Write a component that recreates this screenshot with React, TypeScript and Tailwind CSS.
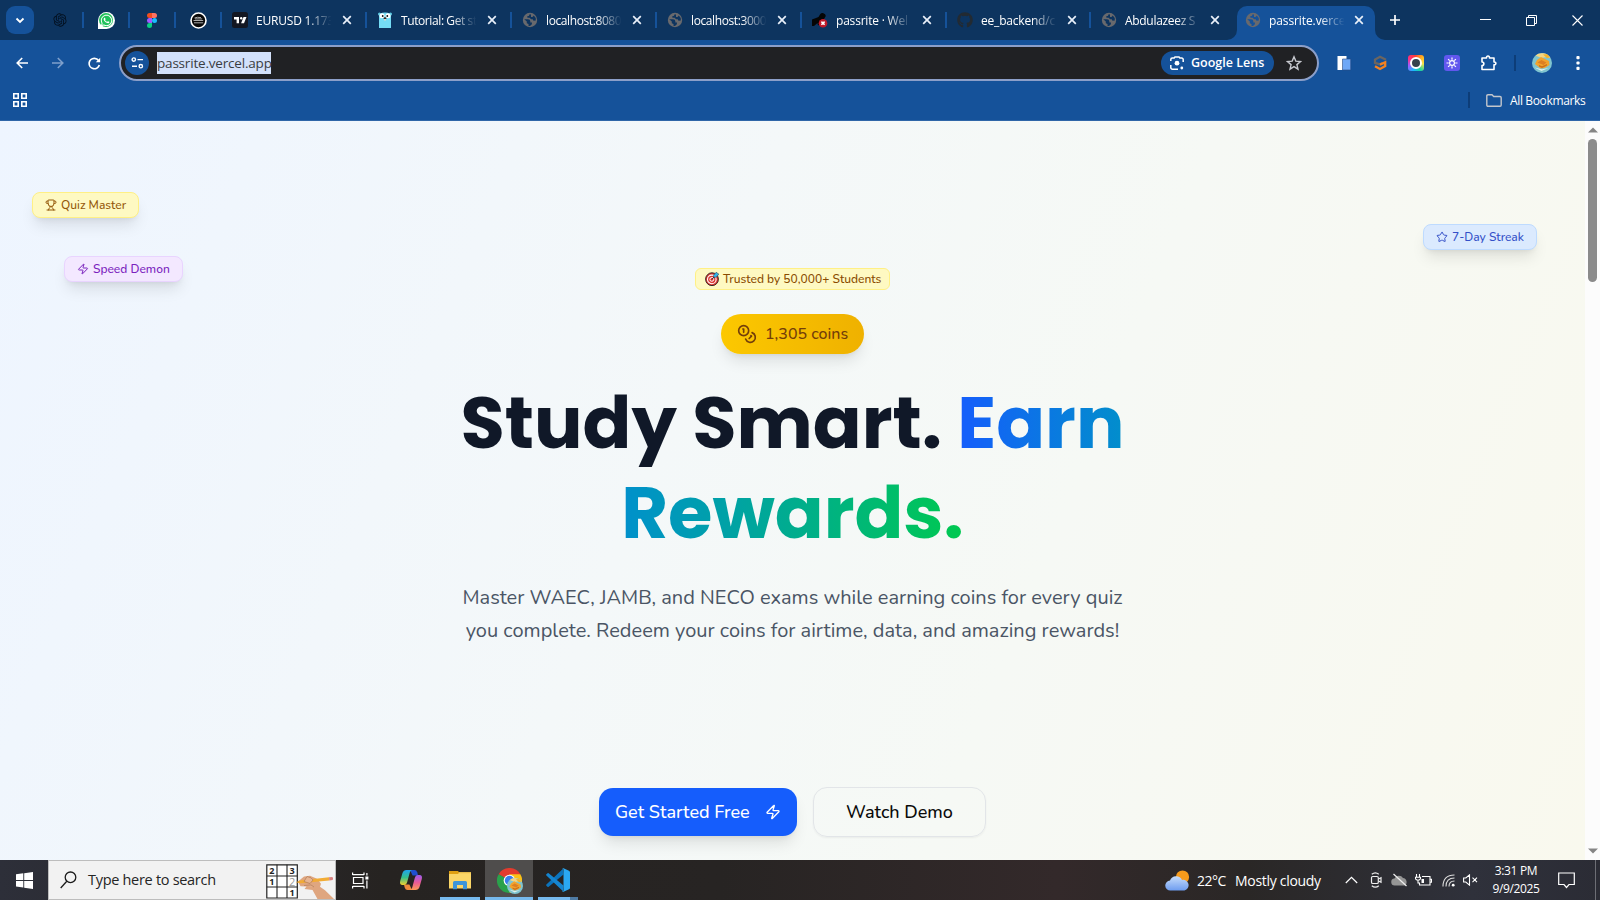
import type { ReactNode } from "react";
import { RiOpenaiFill } from "react-icons/ri";
import { FaGithub, FaWhatsapp } from "react-icons/fa";
import { Coins, Star, Trophy, Zap } from "lucide-react";

function Globe({ hole }: { hole: string }) {
  return (
    <svg width="16" height="16" viewBox="0 0 16 16">
      <circle cx="8" cy="8" r="7.2" fill="#68696d" />
      <path d="M2.200 7.300H6q2.300 0 2.300 2v1.200H10q.6 2-1.700 3.200-1.300.6-1.800 0v-1.700l-1.700-.8V9.500z" fill={hole} />
      <path d="M7.700 2.300l-.9 1.600H5.400v1.800h2.200l1.500 1.600h1.600l.8 1.400 2.300-.2q.2-3.200-2-4.900l-1.300 1.300H9V2.500z" fill={hole} />
    </svg>
  );
}

function Gopher() {
  return (
    <svg width="16" height="16" viewBox="0 0 16 16">
      <circle cx="2.500" cy="2" r="1.500" fill="#5dc9e2" />
      <circle cx="13.500" cy="2" r="1.500" fill="#5dc9e2" />
      <path d="M2 16V4.500Q2 .5 8 .5t6 4V16z" fill="#74dcf5" />
      <circle cx="5" cy="3.800" r="2.500" fill="#fff" />
      <circle cx="11" cy="3.800" r="2.500" fill="#fff" />
      <circle cx="5.700" cy="4" r=".9" fill="#111" />
      <circle cx="10.300" cy="4" r=".9" fill="#111" />
      <ellipse cx="8" cy="6.300" rx="1.500" ry="1" fill="#3b2b25" />
      <path d="M7.200 7h1.600v1.500H7.200z" fill="#f0dcc8" />
    </svg>
  );
}

function TradingView() {
  return (
    <svg width="16" height="16" viewBox="0 0 16 16">
      <rect width="16" height="16" rx="2.500" fill="#131722" />
      <path d="M2 5h5v6.200H4.600V7.500H2zM11.500 5h3l-2.500 6.200H9.100z" fill="#fff" />
      <circle cx="9.200" cy="6.200" r="1.200" fill="#fff" />
    </svg>
  );
}

function RunnerError() {
  return (
    <svg width="16" height="16" viewBox="0 0 16 16">
      <path d="M0 14V7.500l4-1.500 2.500-1L8 2.500A3.200 3.200 0 0113.800 4L12 7l-2 1-2 5-2 .3L5.500 11 2 14z" fill="#050505" />
      <circle cx="11" cy="11.200" r="4.300" fill="#c01a2a" />
      <path d="M9.400 9.600l3.200 3.200m0-3.200l-3.200 3.200" stroke="#fff" strokeWidth="1.500" />
    </svg>
  );
}

function CloseX() {
  return (
    <svg width="10" height="10" viewBox="0 0 10 10" className="shrink-0">
      <path d="M1.200 1.200l7.600 7.600M8.800 1.200L1.200 8.800" stroke="#e9f0fa" strokeWidth="1.700" />
    </svg>
  );
}

function Title({ children, tracking }: { children: ReactNode; tracking: string }) {
  return (
    <span
      className={`ml-2 w-[77px] shrink-0 pt-[2px] whitespace-nowrap text-[12px] leading-[18px] text-white [mask-image:linear-gradient(to_right,black_66%,transparent_98%)] ${tracking}`}
    >
      {children}
    </span>
  );
}

function Tab({ icon, title, width, tracking }: { icon: ReactNode; title: string; width: string; tracking: string }) {
  return (
    <div className={`flex h-full shrink-0 items-center pl-[10px] ${width}`}>
      <span className="flex w-4 shrink-0 justify-center">{icon}</span>
      <Title tracking={tracking}>{title}</Title>
      <span className="ml-[9px]">
        <CloseX />
      </span>
      <span className="ml-auto h-4 w-[2px] bg-[#15529a]" />
    </div>
  );
}

function PinnedTab({ children }: { children: ReactNode }) {
  return (
    <div className="flex h-full w-[46px] shrink-0 items-center">
      <span className="flex flex-1 justify-center">{children}</span>
      <span className="h-4 w-[2px] bg-[#15529a]" />
    </div>
  );
}

function TabStrip() {
  return (
    <div className="flex h-10 items-center bg-[#0d345f]">
      <div className="ml-[6px] flex size-7 shrink-0 items-center justify-center rounded-[9px] bg-[#15529a]">
        <svg width="10" height="7" viewBox="0 0 10 7">
          <path d="M1.500 1.500L5 5l3.500-3.500" fill="none" stroke="#fff" strokeWidth="1.800" />
        </svg>
      </div>
      <div className="ml-1 flex h-full shrink-0">
        <PinnedTab>
          <RiOpenaiFill size={16} color="#03101f" />
        </PinnedTab>
        <PinnedTab>
          <span className="flex size-[17px] items-center justify-center rounded-full rounded-bl-[4px] bg-white">
            <span className="flex size-[14px] items-center justify-center rounded-full bg-[#20c25a]">
              <FaWhatsapp size={13} color="#fff" />
            </span>
          </span>
        </PinnedTab>
        <PinnedTab>
          <svg width="10" height="15" viewBox="0 0 10 15">
            <path d="M5 0H2.500a2.500 2.500 0 000 5H5z" fill="#f24e1e" />
            <path d="M5 0h2.500a2.500 2.500 0 010 5H5z" fill="#ff7262" />
            <path d="M5 5H2.500a2.500 2.500 0 000 5H5z" fill="#a259ff" />
            <circle cx="7.500" cy="7.500" r="2.500" fill="#1abcfe" />
            <path d="M5 10H2.500A2.500 2.500 0 105 12.500z" fill="#0acf83" />
          </svg>
        </PinnedTab>
        <PinnedTab>
          <svg width="17" height="17" viewBox="0 0 17 17">
            <circle cx="8.500" cy="8.500" r="7.500" fill="#080808" stroke="#fff" strokeWidth="1.600" />
            <path d="M4.500 6Q7 4.800 11 5.600M3.500 8.500h9.700M4 10.800h9.200M5 6.900h7.200" stroke="#bdbdbd" strokeWidth=".9" fill="none" />
          </svg>
        </PinnedTab>
      </div>
      <Tab width="w-[145px]" icon={<TradingView />} title="EURUSD 1.173" tracking="tracking-[-0.2px]" />
      <Tab width="w-[145px]" icon={<Gopher />} title="Tutorial: Get st" tracking="tracking-[-0.4px]" />
      <Tab width="w-[145px]" icon={<Globe hole="#0d345f" />} title="localhost:8080" tracking="tracking-[-0.4px]" />
      <Tab width="w-[145px]" icon={<Globe hole="#0d345f" />} title="localhost:3000" tracking="tracking-[-0.4px]" />
      <Tab width="w-[145px]" icon={<RunnerError />} title="passrite · Wel" tracking="tracking-[-0.2px]" />
      <Tab width="w-[144px]" icon={<FaGithub size={16} color="#222a32" />} title="ee_backend/c" tracking="tracking-[-0.2px]" />
      <div className="flex h-full w-[146px] shrink-0 items-center pl-[10px]">
        <span className="w-4 shrink-0">
          <Globe hole="#0d345f" />
        </span>
        <Title tracking="tracking-[-0.3px]">Abdulazeez S</Title>
        <span className="ml-[8px]">
          <CloseX />
        </span>
      </div>
      <div className="relative mt-[6px] flex h-[34px] w-[138px] shrink-0 items-center rounded-t-[10px] bg-[#15529a] pb-[6px] pl-2">
        <svg width="10" height="10" viewBox="0 0 10 10" className="absolute bottom-0 -left-[10px]">
          <path d="M10 0v10H0A10 10 0 0010 0z" fill="#15529a" />
        </svg>
        <svg width="10" height="10" viewBox="0 0 10 10" className="absolute -right-[10px] bottom-0">
          <path d="M0 0v10h10A10 10 0 010 0z" fill="#15529a" />
        </svg>
        <span className="w-4 shrink-0">
          <Globe hole="#15529a" />
        </span>
        <Title tracking="tracking-[-0.1px]">passrite.verce</Title>
        <span className="ml-[8px]">
          <CloseX />
        </span>
      </div>
      <svg width="12" height="12" viewBox="0 0 12 12" className="ml-[14px] shrink-0">
        <path d="M6 1v10M1 6h10" stroke="#fff" strokeWidth="1.700" />
      </svg>
      <div className="mr-[17px] ml-auto flex items-center gap-[35px]">
        <svg width="11" height="12" viewBox="0 0 11 12">
          <path d="M0 5.500h11" stroke="#fff" />
        </svg>
        <svg width="11" height="11" viewBox="0 0 11 11">
          <path d="M.5 2.500h8v8h-8zM2.500 2.500v-2h8v8h-2" fill="none" stroke="#fff" />
        </svg>
        <svg width="11" height="11" viewBox="0 0 11 11">
          <path d="M.5.5l10 10M10.500.5l-10 10" stroke="#fff" strokeWidth="1.100" />
        </svg>
      </div>
    </div>
  );
}

function AvatarArt({ size }: { size: number }) {
  return (
    <svg width={size} height={size} viewBox="0 0 20 20">
      <circle cx="10" cy="10" r="10" fill="#7fc4cf" />
      <path d="M3.500 2.500A10 10 0 0118.500 5l-4-1-5 1z" fill="#f3d583" />
      <path d="M11 1.500l4-.2 3 3-3 1z" fill="#f2b32c" />
      <path d="M3 11l2-4 4-3 8 4 .5 4-5 3-4 .5z" fill="#f2a32c" />
      <path d="M5.500 9.500l4-2.500 5 2.500-3 2.500z" fill="#dd7f22" />
      <path d="M7 12l3 1.200 5-2.200v1.500l-5 2.500-3-1.500z" fill="#c9701c" />
      <path d="M2.500 14.500l7 3.500 7-3-6.500 1.200z" fill="#dff1ee" />
    </svg>
  );
}

function Toolbar() {
  return (
    <div className="flex h-[46px] items-center bg-[#15529a]">
      <div className="flex w-[119px] shrink-0 items-center gap-6 pl-4">
        <svg width="12" height="12" viewBox="0 0 12 12">
          <path d="M12 6H1.500M6.200 1L1.200 6l5 5" fill="none" stroke="#fff" strokeWidth="1.600" />
        </svg>
        <svg width="12" height="12" viewBox="0 0 12 12">
          <path d="M0 6h10.500M5.800 1l5 5-5 5" fill="none" stroke="#7fa0cb" strokeWidth="1.600" />
        </svg>
        <svg width="13" height="13" viewBox="0 0 13 13">
          <path d="M11.300 8A5.200 5.200 0 116.400 1.300c2 0 3.300.9 4.700 2.700" fill="none" stroke="#fff" strokeWidth="1.700" />
          <path d="M12.200.8v4.400H7.800z" fill="#fff" />
        </svg>
      </div>
      <div className="flex h-9 w-[1200px] shrink-0 items-center rounded-full border-2 border-[#8c9fc9] bg-[#202124] pl-1">
        <span className="flex size-6 items-center justify-center rounded-full bg-[#15529a]">
          <svg width="13" height="12" viewBox="0 0 13 12" fill="none" stroke="#fff" strokeWidth="1.400">
            <circle cx="2.800" cy="2.600" r="1.700" />
            <path d="M6.500 2.600h5.500M1 9.200h5" />
            <circle cx="9.800" cy="9.200" r="1.700" />
          </svg>
        </span>
        <span className="ml-2 h-[22px] w-[114px] bg-[#d3e1fb] text-[13.5px] leading-[22px] tracking-[-0.19px] whitespace-nowrap text-[#3a3d42]">
          passrite.vercel.app
        </span>
        <span className="ml-auto flex h-6 w-[113px] items-center rounded-full bg-[#15529a] pl-[9px]">
          <svg width="14" height="14" viewBox="0 0 14 14" fill="none" stroke="#fff" strokeWidth="1.500">
            <path d="M.8 5V3.500a1.500 1.500 0 011.500-1.500h1.900L5 .9h4l.8 1.100h1.900a1.500 1.500 0 011.500 1.500V6M.8 9v2.500a1.700 1.700 0 001.700 1.700H8" />
            <circle cx="7" cy="7.200" r="2.400" fill="#fff" stroke="none" />
            <circle cx="11.800" cy="12" r="1.400" fill="#fff" stroke="none" />
          </svg>
          <span className="ml-[7px] pt-px text-[12.500px] font-semibold tracking-[0px] whitespace-nowrap text-white">Google Lens</span>
        </span>
        <svg width="16" height="16" viewBox="0 0 16 16" className="mr-[15px] ml-3">
          <path d="M8 1.800l1.800 4.300 4.700.4-3.600 3.100 1.100 4.600L8 11.700l-4 2.500 1.100-4.600-3.600-3.100 4.700-.4z" fill="none" stroke="#c7c9cf" strokeWidth="1.400" />
        </svg>
      </div>
      <div className="ml-[17px] flex items-center gap-5">
        <svg width="16" height="16" viewBox="0 0 16 16">
          <path d="M1.500 1h9v14h-9z" fill="#fff" />
          <path d="M6.500 4h8.200v11H6.500z" fill="#6fa8f7" stroke="#2a4a80" strokeWidth=".6" />
        </svg>
        <svg width="16" height="16" viewBox="0 0 16 16" fill="none" strokeWidth="2.300">
          <path d="M14 4.800L8 1.800 3 4.600v3.200l5 1.600 2.500-1.600" stroke="#6b6560" />
          <path d="M3 11.200L8 14l5.200-3V7.200L8 9.600" stroke="#f58220" />
        </svg>
        <span className="flex size-4 items-center justify-center rounded-[3px] bg-[conic-gradient(from_45deg,#ffb020,#f6e34b,#1bd4a0,#18b8ff,#a05cff,#ff2f7d,#ff3b30,#ffb020)]">
          <span className="size-[12px] rounded-full border-2 border-white bg-[#35424d]" />
        </span>
        <span className="flex size-4 items-center justify-center rounded-[3px] bg-[#6257ee]">
          <svg width="12" height="12" viewBox="0 0 12 12" stroke="#fff" strokeWidth="1.200">
            <circle cx="6" cy="6" r="2.400" fill="none" />
            <path d="M6 .5v2.300M6 9.200v2.300M.5 6h2.300M9.200 6h2.300M2.100 2.100l1.600 1.600M8.300 8.300l1.600 1.600M2.100 9.900l1.600-1.600M8.300 3.700l1.600-1.600" />
          </svg>
        </span>
        <svg width="18" height="18" viewBox="0 0 18 18">
          <path d="M2 4h4.500c-.3-2.700 3.300-2.700 3 0H14v4c2.500-.3 2.500 3 0 2.700v4.800H2v-4c2.500 0 2.500-3.500 0-3.500z" fill="none" stroke="#fff" strokeWidth="1.600" strokeLinejoin="round" />
        </svg>
      </div>
      <span className="ml-4 h-4 w-[2px] bg-[#0d3d78]" />
      <span className="ml-4 flex">
        <AvatarArt size={20} />
      </span>
      <svg width="4" height="14" viewBox="0 0 4 14" className="ml-6" fill="#fff">
        <rect x=".4" y="0" width="3.200" height="3.200" rx="1" />
        <rect x=".4" y="5.400" width="3.200" height="3.200" rx="1" />
        <rect x=".4" y="10.800" width="3.200" height="3.200" rx="1" />
      </svg>
    </div>
  );
}

function BookmarksBar() {
  return (
    <div className="flex h-[35px] items-center border-b border-[#2f66a8] bg-[#15529a] pb-[6px] pl-[13px]">
      <svg width="14" height="14" viewBox="0 0 14 14" fill="none" stroke="#fff" strokeWidth="1.600">
        <path d="M.8.8h4.400v4.400H.8zM8.800.8h4.400v4.400H8.800zM.8 8.800h4.400v4.400H.8zM8.800 8.800h4.400v4.400H8.800z" />
      </svg>
      <span className="ml-auto h-4 w-[2px] bg-[#0d3d78]" />
      <svg width="16" height="13" viewBox="0 0 16 13" className="ml-4" fill="none" stroke="#c3c6cc" strokeWidth="1.400">
        <path d="M.8 11V2Q.8.800 2 .800h4L7.700 2.500H14q1.200 0 1.200 1.200V11q0 1.200-1.200 1.200H2Q.800 12.200.800 11z" />
      </svg>
      <span className="ml-2 w-[75px] pt-px text-[12px] tracking-[-0.36px] whitespace-nowrap text-white">All Bookmarks</span>
      <span className="w-[15px]" />
    </div>
  );
}

function Hero() {
  return (
    <div className="relative flex flex-1 flex-col items-center bg-[linear-gradient(112deg,#eef5ff,#f4f8f9_42%,#f6f9f5_65%,#f9f9ee)] font-[Nunito,Lato,sans-serif]">
      <div className="absolute top-[71px] left-8 flex h-[26px] w-[107px] items-center gap-1 rounded-lg border border-[#fff085] bg-[#fef9c2] px-3 text-[12px] font-medium whitespace-nowrap text-[#94580a] shadow-lg">
        <Trophy size={12} className="shrink-0" />
        <span>Quiz Master</span>
      </div>
      <div className="absolute top-[135px] left-16 flex h-[26px] w-[119px] items-center gap-1 rounded-lg border border-[#e9d4ff] bg-[#f3e8ff] px-3 text-[12px] font-medium whitespace-nowrap text-[#7a22bd] shadow-lg">
        <Zap size={12} className="shrink-0" />
        <span>Speed Demon</span>
      </div>
      <div className="absolute top-[103px] right-12 flex h-[26px] w-[114px] items-center gap-1 rounded-lg border border-[#bedbff] bg-[#dbeafe] px-3 text-[12px] font-medium whitespace-nowrap text-[#3450c8] shadow-lg">
        <Star size={12} className="shrink-0" />
        <span>7-Day Streak</span>
      </div>

      <div className="mt-[147px] flex h-[22px] w-[195px] items-center rounded-md border border-[#fff085] bg-[#fef9c2] pl-[9px] text-[12px] font-medium whitespace-nowrap text-[#894b00]">
        <svg width="14" height="14" viewBox="0 0 14 14" className="shrink-0">
          <circle cx="7" cy="7.200" r="6.400" fill="#e03a34" stroke="#241a1a" strokeWidth=".9" />
          <circle cx="6.800" cy="7.400" r="4.300" fill="none" stroke="#fff" strokeWidth="1.100" />
          <circle cx="6.800" cy="7.400" r="1.900" fill="none" stroke="#fff" strokeWidth="1" />
          <path d="M7 7.300L10.500 3.600" stroke="#222" strokeWidth="1" />
          <path d="M8.500 3.300L11.500 0l.9 1.500 1.600.6L11.200 5.200l-2.400.1z" fill="#34b5ea" stroke="#163b56" strokeWidth=".5" />
        </svg>
        <span className="ml-1">Trusted by 50,000+ Students</span>
      </div>

      <div className="mt-6 flex h-10 w-[143px] items-center gap-2 rounded-full bg-[linear-gradient(to_right,#fcc800,#efb100)] px-4 text-[16px] font-medium whitespace-nowrap text-[#733e0a] shadow-lg">
        <Coins size={20} className="shrink-0" />
        <span>1,305 coins</span>
      </div>

      <h1 className="mt-6 w-[760px] text-center font-[Poppins,Inter,sans-serif] text-[72px] leading-[90px] font-bold whitespace-nowrap text-[#101828]">
        Study Smart.{" "}
        <span className="bg-[linear-gradient(to_right,#155dfc,#0092c8_35%,#00c950)] bg-clip-text text-transparent">
          Earn
          <br />
          Rewards.
        </span>
      </h1>

      <p className="mt-[23px] text-center text-[20px] leading-[33px] whitespace-nowrap text-[#4a5565]">
        Master WAEC, JAMB, and NECO exams while earning coins for every quiz
        <br />
        you complete. Redeem your coins for airtime, data, and amazing rewards!
      </p>

      <div className="mt-auto mb-[23px] flex items-center gap-4">
        <button className="flex h-12 w-[198px] items-center rounded-[14px] bg-[#155dfc] px-4 text-[18px] font-medium whitespace-nowrap text-white shadow-lg">
          <span>Get Started Free</span>
          <Zap size={16} className="ml-auto" />
        </button>
        <button className="flex h-[50px] w-[173px] items-center justify-center rounded-[14px] border border-[#e2e5e8] text-[18px] font-medium whitespace-nowrap text-[#0a0a0a] shadow-xs">
          Watch Demo
        </button>
      </div>
    </div>
  );
}

function Scrollbar() {
  return (
    <div className="flex w-[15px] flex-col items-center bg-[#fcfcfc]">
      <svg width="10" height="6" viewBox="0 0 10 6" className="mt-[6px]">
        <path d="M0 5.500h10L5 .500z" fill="#858585" />
      </svg>
      <div className="mt-[6px] h-[143px] w-[9px] rounded-full bg-[#8b8b8b]" />
      <svg width="10" height="6" viewBox="0 0 10 6" className="mt-auto mb-[6px]">
        <path d="M0 .5h10L5 5.500z" fill="#858585" />
      </svg>
    </div>
  );
}

function SudokuArt() {
  return (
    <svg width="69" height="38" viewBox="0 0 69 38" className="shrink-0">
      <path d="M.8 3.800h30.500V37H.8z" fill="#fff" stroke="#222" strokeWidth="1.200" />
      <path d="M11 3.800V37M21 3.800V37M.8 15h30.500M.8 26h30.500" stroke="#222" strokeWidth="1.100" />
      <g fontSize="9" fontWeight="700" fill="#222" textAnchor="middle">
        <text x="5.900" y="12.700">2</text>
        <text x="26.200" y="12.700">3</text>
        <text x="5.900" y="24">1</text>
        <text x="26.200" y="35">1</text>
        <text x="26.200" y="24.500" fontSize="11" fill="#999" fontWeight="400">2</text>
      </g>
      <path d="M32 20.500l6-5 6-.8 7 3 4 5-1 3 5 3.500L68 38H51.500l-5-9-8-1 2-2.500-6-.3z" fill="#dfa680" />
      <path d="M30 21.200l4-1.700 29-3.200.3 3.200-29 2.800z" fill="#f2ac35" />
      <path d="M63 16.300l3.500-.3q1 1.500.2 3l-3.400.5z" fill="#d98080" />
      <path d="M41 15.500q5 1 6 3.500l-3 3.500-6-2zM38 24.500l7-.5 3 2" fill="#e8b592" stroke="#b07a56" strokeWidth=".7" />
    </svg>
  );
}

function CopilotArt() {
  return (
    <svg width="24" height="22" viewBox="0 0 24 22">
      <defs>
        <linearGradient id="cpLeft" x1="0" y1="0" x2="0" y2="1">
          <stop offset="0" stopColor="#1ea3f0" />
          <stop offset=".5" stopColor="#35bf8c" />
          <stop offset="1" stopColor="#f4d02c" />
        </linearGradient>
        <linearGradient id="cpRight" x1="0" y1="0" x2="0" y2="1">
          <stop offset="0" stopColor="#9b5cf0" />
          <stop offset=".5" stopColor="#e85a96" />
          <stop offset="1" stopColor="#fb9a55" />
        </linearGradient>
      </defs>
      <path d="M11 1h4.500q2 0 2.700 2.300l.9 3.200h-5.500z" fill="#1f4fd0" />
      <path d="M13 21H8.500q-2 0-2.700-2.300l-.9-3.200h5.500z" fill="#f08a3c" />
      <path d="M7.500 1H13q-1.500 0-2.300 2.800L8.200 13q-.8 3-3.200 3H3.500Q.3 16 1.200 12L3.500 4Q4.500 1 7.500 1z" fill="url(#cpLeft)" />
      <path d="M16.500 21H11q1.500 0 2.300-2.800L15.800 9q.8-3 3.200-3h1.500q3.200 0 2.300 4l-2.300 8q-1 3-4 3z" fill="url(#cpRight)" />
    </svg>
  );
}

function Taskbar() {
  return (
    <div className="flex h-10 items-center bg-[linear-gradient(to_right,#2d2f39,#262321_24%,#272423_45%,#33292a_66%,#2a2726_78%,#2f313b_92%,#2b2c35)] text-white">
      <div className="flex w-12 shrink-0 justify-center">
        <svg width="17" height="17" viewBox="0 0 17 17" fill="#fff">
          <path d="M0 2.300l7.300-1v6.700H0zM8.200 1.200L17 0v8H8.200zM0 8.900h7.300v6.700l-7.300-1zM8.200 8.900H17v8l-8.800-1.200z" />
        </svg>
      </div>
      <div className="flex h-10 w-[288px] shrink-0 items-center border border-[#bdbdbd] bg-[#f2f2f2] pl-[11px] text-[#252525]">
        <svg width="17" height="18" viewBox="0 0 17 18" fill="none" stroke="#1b1b1b" strokeWidth="1.300">
          <circle cx="10.500" cy="6.300" r="5.300" />
          <path d="M6.800 10.300L.7 17" />
        </svg>
        <span className="ml-[11px] text-[14.500px] tracking-[-0.3px] whitespace-nowrap">Type here to search</span>
        <span className="ml-auto flex">
          <SudokuArt />
        </span>
      </div>
      <div className="flex w-12 shrink-0 justify-center">
        <svg width="17" height="17" viewBox="0 0 17 17" fill="none" stroke="#fff" strokeWidth="1.200">
          <path d="M1.500 5.500h9.500v6H1.500zM.6 3V.6M.6 2.600h11.400M12 3V.6M.6 14v2.500M.6 14.400h11.400M12 14v2.500M14.900 1v2.500M14.900 8.500v8" />
          <path d="M13.400 4.500h3v3h-3z" fill="#fff" stroke="none" />
        </svg>
      </div>
      <div className="flex w-[54px] shrink-0 justify-center">
        <CopilotArt />
      </div>
      <div className="ml-[2px] flex h-10 w-10 shrink-0 items-center justify-center border-b-[3px] border-[#76b9ed]">
        <svg width="22" height="20" viewBox="0 0 22 20" className="mt-[3px]">
          <path d="M0 1h9l1 1.200h12V6H0z" fill="#e0a012" />
          <path d="M10 2.200h12v2H9z" fill="#f7cf5f" />
          <path d="M0 4h22v14.500H0z" fill="#fbd667" />
          <path d="M4 19.300V12.500Q4 11 5.500 11h11q1.500 0 1.500 1.500v6.800h-4V15H8v4.300z" fill="#3d95d8" />
        </svg>
      </div>
      <div className="ml-[5px] flex h-10 w-12 shrink-0 items-center justify-center border-b-[3px] border-[#76b9ed] bg-[#4f4d4c]">
        <span className="relative mt-[3px] flex">
          <svg width="25" height="25" viewBox="0 0 24 24">
            <path d="M12 12L1.600 6A12 12 0 0122.400 6z" fill="#e33b2e" />
            <path d="M12 12L1.600 6A12 12 0 0012 24l5.200-9z" fill="#2aa14b" />
            <path d="M12 12h5.200L12 24A12 12 0 0022.400 6H12z" fill="#fbc116" />
            <circle cx="12" cy="12" r="5.600" fill="#fff" />
            <circle cx="12" cy="12" r="4.500" fill="#3b7ded" />
          </svg>
          <span className="absolute -right-[1px] -bottom-[1px] flex">
            <AvatarArt size={16} />
          </span>
        </span>
      </div>
      <div className="ml-[5px] flex h-10 w-10 shrink-0 flex-col">
        <div className="flex h-[37px] items-center pt-[3px] pl-2">
          <svg width="24" height="24" viewBox="0 0 24 24">
            <path d="M17.500 6.500L2.700 18.700q-.6.500-1.200 0L.4 17.700q-.6-.6 0-1.200L17 .8z" fill="#0b74bd" />
            <path d="M17.500 17.500L2.700 5.300q-.6-.5-1.200 0L.4 6.300q-.6.600 0 1.200L17 23.200z" fill="#1585d0" />
            <path d="M17.500.2L23 2.700q1 .5 1 1.500v15.600q0 1-1 1.500l-5.500 2.500q-1 .2-1.500-.6 1.500.6 1.500-1V1.800q0-1.600-1.500-1Q16.500 0 17.500.2z" fill="#2aa8f2" />
          </svg>
        </div>
        <div className="flex h-[3px]">
          <span className="w-8 bg-[#76b9ed]" />
          <span className="w-2 bg-[#4f7ba3]" />
        </div>
      </div>

      <div className="ml-auto flex h-10 shrink-0 items-center">
        <svg width="25" height="21" viewBox="0 0 25 21">
          <defs>
            <linearGradient id="cloud" x1="0" y1="0" x2="0" y2="1">
              <stop offset="0" stopColor="#c6dcfb" />
              <stop offset="1" stopColor="#6e9df0" />
            </linearGradient>
          </defs>
          <circle cx="17.500" cy="7" r="6.600" fill="#f79b1c" />
          <path d="M5.500 20.500a5 5 0 01-.5-10A6.500 6.500 0 0117 10a5.300 5.300 0 012.500 10.500z" fill="url(#cloud)" />
        </svg>
        <span className="ml-[7px] w-[38px] text-[14px] tracking-[-0.5px] whitespace-nowrap">22°C</span>
        <span className="w-[87px] text-[14px] tracking-[-0.300px] whitespace-nowrap">Mostly cloudy</span>
        <svg width="13" height="8" viewBox="0 0 13 8" className="ml-[23px]">
          <path d="M.8 7L6.500 1.300 12.200 7" fill="none" stroke="#fff" strokeWidth="1.200" />
        </svg>
        <svg width="13" height="16" viewBox="0 0 13 16" className="ml-3" fill="none" stroke="#eee" strokeWidth="1.200">
          <rect x="1.500" y="4.500" width="6.800" height="7" rx="1.300" />
          <path d="M8.500 7l2.500-1.300v4.600L8.500 9M1.800 2.300Q5.300-.5 8.800 2.300M1.800 13.700q3.500 2.800 7 0" />
        </svg>
        <svg width="17" height="14" viewBox="0 0 17 14" className="ml-[8px]">
          <path d="M4 12.500A3.500 3.500 0 013.500 5.500 4.800 4.800 0 0112 5a4 4 0 011.500 7.500z" fill="#959595" />
          <path d="M2.500 1l13 12" stroke="#efefef" strokeWidth="1.200" />
        </svg>
        <svg width="17" height="13" viewBox="0 0 17 13" className="ml-[7px]" fill="none" stroke="#fff" strokeWidth="1.100">
          <path d="M7 2.500h8v8.500H4.500V9M15.500 5.300h1v3h-1M1.500 0v3M4.500 0v3M.5 3.200h5v1.500Q5 6.200 3 6.200T.5 4.700zM3 6v3h2" />
          <path d="M6.500 5h2.500v4H6.500z" fill="#fff" stroke="none" />
        </svg>
        <svg width="13" height="13" viewBox="0 0 13 13" className="ml-[10px]" fill="none" stroke="#ddd" strokeWidth="1.100">
          <path d="M1 12.500Q1 1 12.500 1M4 12.500Q4 4 12.500 4M7 12.500Q7 7 12.500 7" />
          <circle cx="11.200" cy="11.200" r="1.400" fill="#fff" stroke="none" />
        </svg>
        <svg width="15" height="12" viewBox="0 0 15 12" className="ml-2" fill="none" stroke="#fff" strokeWidth="1.100">
          <path d="M.6 4h2.200L6.500.9v10.200L2.800 8H.6zM9.500 3.700l4.500 4.500M14 3.700L9.500 8.200" />
        </svg>
        <div className="ml-3 w-[52px] text-center text-[12px] leading-[18px] tracking-[-0.35px] whitespace-nowrap">
          <div>3:31 PM</div>
          <div>9/9/2025</div>
        </div>
        <svg width="17" height="17" viewBox="0 0 17 17" className="ml-4" fill="none" stroke="#fff" strokeWidth="1.200">
          <path d="M.7 1h15.600v11.500h-5.300L8.500 15.500 6 12.500H.7z" />
        </svg>
        <span className="ml-[20px] h-10 w-px bg-[#6d6e75]" />
        <span className="w-1" />
      </div>
    </div>
  );
}

export default function App() {
  return (
    <div className="flex h-[900px] w-[1600px] flex-col overflow-hidden font-['Segoe_UI','Open_Sans',sans-serif]">
      <TabStrip />
      <Toolbar />
      <BookmarksBar />
      <div className="flex min-h-0 flex-1">
        <Hero />
        <Scrollbar />
      </div>
      <Taskbar />
    </div>
  );
}
